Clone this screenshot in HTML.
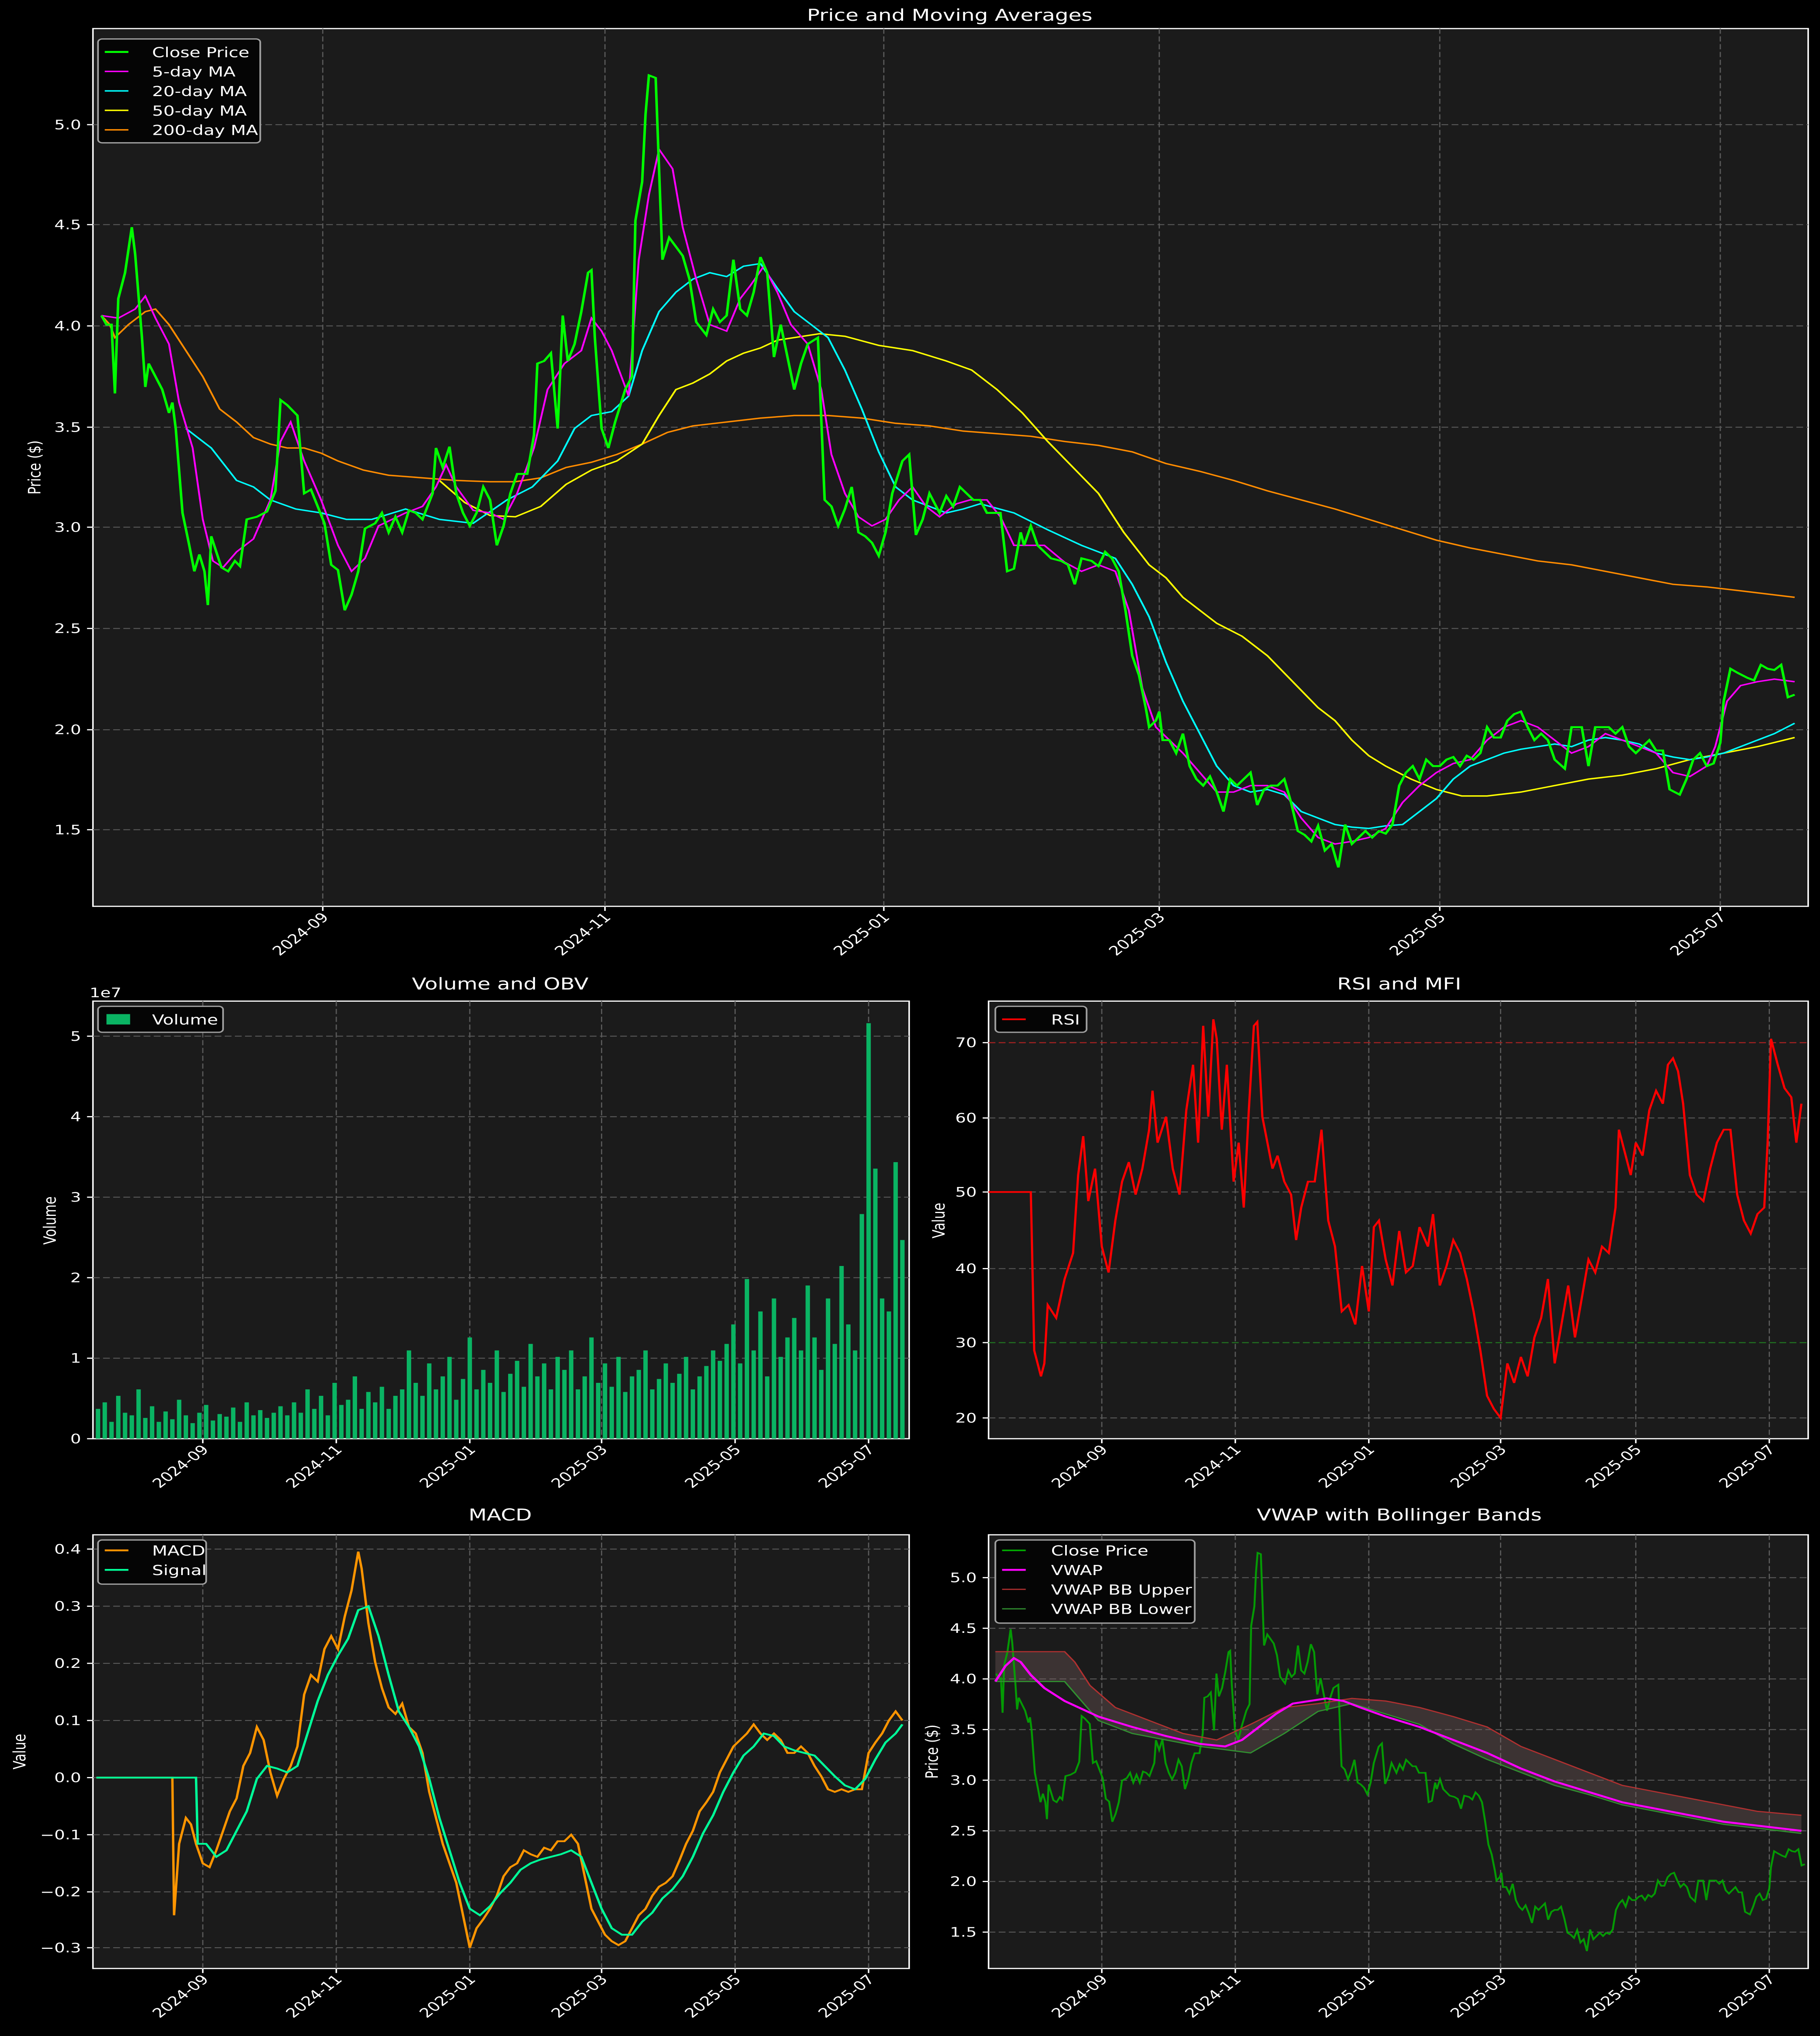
<!DOCTYPE html>
<html><head><meta charset="utf-8"><style>
html,body{margin:0;padding:0;background:#000;width:100%;height:100%;overflow:hidden;}
svg{display:block;position:absolute;left:0;top:0;width:100vw;height:100vh;}
text{font-family:"DejaVu Sans","Liberation Sans",sans-serif;fill:#fff;}
.t{font-size:10px;}
.ti{font-size:12.5px;}
.lg{font-size:10.5px;}
.grid line{stroke:#5a5a5a;stroke-width:0.7;stroke-dasharray:4 2;}
.ax{fill:#1b1b1b;stroke:#fff;stroke-width:0.9;}
.tk line{stroke:#fff;stroke-width:0.9;}
.leg{fill:#050505;stroke:#a0a0a0;stroke-width:1;}
</style></head><body>
<svg width="100%" height="100%" viewBox="0 0 1077 1568" preserveAspectRatio="none" xmlns="http://www.w3.org/2000/svg">
<defs>
<path id="close" d="M60 243L63 250L66 250L68 303L70 230L74 210L78 175L80 196L84 260L86 298L88 280L92 290L96 300L100 318L102 310L104 330L108 395L112 420L115 440L118 427L121 440L123 466L125 413L128 425L131 437L135 440L139 432L142 436L146 400L152 398L158 394L163 378L166 308L170 312L176 320L180 380L184 377L188 390L192 403L196 435L200 439L204 470L208 458L212 440L216 407L222 403L226 395L230 410L234 398L238 410L242 393L246 395L250 400L256 380L258 345L262 360L266 344L270 380L274 395L278 405L282 395L286 375L290 385L294 420L298 405L302 380L306 365L312 365L316 335L318 280L322 278L326 272L330 330L333 243L336 278L340 265L344 240L348 210L350 208L352 260L356 330L360 345L364 325L370 300L374 290L376 170L380 140L382 88L384 58L388 60L392 200L396 183L400 190L404 197L408 215L412 248L418 258L422 238L426 248L430 243L434 200L438 238L442 243L446 225L450 198L454 210L458 275L462 250L466 275L470 300L474 280L478 265L484 260L486 323L488 385L492 390L496 405L500 392L504 375L508 410L512 413L516 418L520 428L524 410L528 380L534 355L538 350L542 412L546 400L550 380L556 395L560 382L564 390L568 375L572 380L576 385L580 385L584 395L588 395L592 395L596 440L600 438L604 410L606 420L610 405L614 420L618 425L622 430L628 432L632 435L636 450L640 430L646 432L650 436L654 425L658 430L662 440L666 470L670 505L674 520L678 545L680 560L684 555L686 548L688 570L692 570L696 580L700 565L704 590L708 600L712 605L716 598L720 610L724 625L728 600L732 605L736 600L740 595L744 620L748 608L752 605L756 605L760 600L764 618L768 640L772 643L776 648L780 636L784 655L788 650L792 668L796 635L800 650L804 645L808 640L812 645L816 640L820 642L824 635L828 605L832 595L836 590L840 600L844 585L848 590L852 590L856 585L860 583L864 590L868 582L872 585L876 580L880 560L884 568L888 568L892 555L896 550L900 548L904 560L908 570L912 565L916 570L920 585L926 592L930 560L936 560L940 590L944 560L948 560L952 560L956 565L960 560L964 575L968 580L972 575L976 570L980 578L984 578L988 608L994 612L998 600L1002 585L1006 580L1010 590L1014 588L1018 572L1020 540L1024 515L1028 518L1034 522L1038 524L1042 512L1046 515L1050 516L1054 512L1058 537L1062 535" fill="none"/>
</defs>
<rect x="0" y="0" width="1077" height="1568" fill="#000"/>

<text class="ti" x="562" y="16" text-anchor="middle">Price and Moving Averages</text>
<rect class="ax" x="55" y="22" width="1015" height="676"/>
<g class="grid">
<line x1="55" x2="1070" y1="96" y2="96"/><line x1="55" x2="1070" y1="173" y2="173"/><line x1="55" x2="1070" y1="251" y2="251"/><line x1="55" x2="1070" y1="329" y2="329"/><line x1="55" x2="1070" y1="406" y2="406"/><line x1="55" x2="1070" y1="484" y2="484"/><line x1="55" x2="1070" y1="562" y2="562"/><line x1="55" x2="1070" y1="639" y2="639"/>
<line y1="22" y2="698" x1="191" x2="191"/><line y1="22" y2="698" x1="358" x2="358"/><line y1="22" y2="698" x1="523" x2="523"/><line y1="22" y2="698" x1="686" x2="686"/><line y1="22" y2="698" x1="852" x2="852"/><line y1="22" y2="698" x1="1018" x2="1018"/>
</g>
<polyline fill="none" stroke="#ff8c00" stroke-width="1.1" points="60,243 65,250 68,260 76,250 86,240 92,238 100,250 110,270 120,290 130,315 140,325 150,337 160,342 170,345 180,345 190,349 200,355 215,362 230,366 250,368 270,370 290,371 305,371 320,368 335,360 350,356 365,350 380,342 395,333 410,328 430,325 450,322 470,320 490,320 510,322 530,326 550,328 570,332 590,334 610,336 630,340 650,343 670,348 690,357 710,363 730,370 750,378 770,385 790,392 810,400 830,408 850,416 870,422 890,427 910,432 930,435 950,440 970,445 990,450 1010,452 1030,455 1062,460"/>
<polyline fill="none" stroke="#ffff00" stroke-width="1.1" points="260,370 275,387 290,397 305,398 320,390 335,373 350,362 365,355 380,342 390,320 400,300 410,295 420,288 430,278 440,272 450,268 460,262 470,260 485,257 500,259 520,266 540,270 560,278 575,285 590,300 605,318 620,340 635,360 650,380 665,410 680,435 690,445 700,460 710,470 720,480 735,490 750,505 765,525 780,545 790,555 800,570 810,582 820,590 835,600 850,608 865,613 880,613 900,610 920,605 940,600 960,597 980,592 1000,585 1020,580 1040,575 1062,568"/>
<polyline fill="none" stroke="#00ffff" stroke-width="1.1" points="110,330 125,345 140,370 150,375 160,385 175,392 190,395 205,400 220,400 240,392 260,400 280,403 300,385 315,375 330,355 340,330 350,320 362,317 372,305 380,270 390,240 400,225 410,215 420,210 430,213 440,205 450,203 460,222 470,240 480,250 490,260 500,285 510,315 520,348 530,375 540,385 550,390 560,395 570,392 580,388 600,395 620,408 640,420 660,430 670,450 680,475 690,510 700,540 710,565 720,590 730,605 740,610 750,608 760,612 770,625 780,630 790,635 800,637 810,638 820,636 830,635 840,625 850,615 860,600 870,590 880,585 890,580 900,577 910,575 920,573 930,575 940,570 950,568 960,570 970,573 980,580 990,583 1000,585 1010,583 1020,580 1030,575 1040,570 1050,565 1062,557"/>
<polyline fill="none" stroke="#ff00ff" stroke-width="1.1" points="60,243 70,245 80,238 86,228 92,245 100,265 106,310 114,345 120,400 126,432 132,437 140,425 150,415 160,385 166,340 172,325 180,355 190,385 200,420 208,440 216,430 224,405 232,400 240,395 250,390 258,375 264,358 270,375 280,393 290,395 298,400 306,380 316,345 324,300 334,280 344,270 350,245 356,255 362,270 372,305 378,200 384,150 390,115 398,130 404,175 412,215 420,250 430,255 438,230 444,220 452,205 460,225 468,250 478,265 486,300 492,350 500,380 508,398 516,405 524,400 532,385 540,375 548,390 556,398 566,388 574,385 584,385 592,398 600,420 608,420 618,420 630,433 640,440 650,435 660,440 668,470 676,530 684,560 692,570 700,580 710,595 720,610 730,610 740,605 750,605 760,610 770,630 780,645 790,650 800,648 810,645 820,638 830,618 840,605 850,595 860,588 870,585 880,570 890,560 900,555 910,560 920,570 930,580 940,575 950,565 960,570 970,575 980,580 990,595 1000,598 1010,590 1015,575 1022,540 1030,528 1040,525 1050,523 1062,525"/>
<use href="#close" stroke="#00ff00" stroke-width="1.5"/>
<g class="tk">
<line x1="51.5" x2="55" y1="96" y2="96"/><line x1="51.5" x2="55" y1="173" y2="173"/><line x1="51.5" x2="55" y1="251" y2="251"/><line x1="51.5" x2="55" y1="329" y2="329"/><line x1="51.5" x2="55" y1="406" y2="406"/><line x1="51.5" x2="55" y1="484" y2="484"/><line x1="51.5" x2="55" y1="562" y2="562"/><line x1="51.5" x2="55" y1="639" y2="639"/>
<line y1="698" y2="701.5" x1="191" x2="191"/><line y1="698" y2="701.5" x1="358" x2="358"/><line y1="698" y2="701.5" x1="523" x2="523"/><line y1="698" y2="701.5" x1="686" x2="686"/><line y1="698" y2="701.5" x1="852" x2="852"/><line y1="698" y2="701.5" x1="1018" x2="1018"/>
</g>
<g class="t" text-anchor="end">
<text x="48" y="99.5">5.0</text><text x="48" y="176.5">4.5</text><text x="48" y="254.5">4.0</text><text x="48" y="332.5">3.5</text><text x="48" y="409.5">3.0</text><text x="48" y="487.5">2.5</text><text x="48" y="565.5">2.0</text><text x="48" y="642.5">1.5</text>
<text transform="translate(195,707) rotate(-45)">2024-09</text><text transform="translate(362,707) rotate(-45)">2024-11</text><text transform="translate(527,707) rotate(-45)">2025-01</text><text transform="translate(690,707) rotate(-45)">2025-03</text><text transform="translate(856,707) rotate(-45)">2025-05</text><text transform="translate(1022,707) rotate(-45)">2025-07</text>
</g>
<text class="t" transform="translate(24,360) rotate(-90)" text-anchor="middle">Price ($)</text>
<rect class="leg" x="58" y="30" width="96" height="80" rx="2.5"/>
<line x1="62" x2="76" y1="40" y2="40" stroke="#00ff00" stroke-width="1.5"/><text class="lg" x="90" y="44">Close Price</text>
<line x1="62" x2="76" y1="55" y2="55" stroke="#ff00ff" stroke-width="1.1"/><text class="lg" x="90" y="59">5-day MA</text>
<line x1="62" x2="76" y1="70" y2="70" stroke="#00ffff" stroke-width="1.1"/><text class="lg" x="90" y="74">20-day MA</text>
<line x1="62" x2="76" y1="85" y2="85" stroke="#ffff00" stroke-width="1.1"/><text class="lg" x="90" y="89">50-day MA</text>
<line x1="62" x2="76" y1="100" y2="100" stroke="#ff8c00" stroke-width="1.1"/><text class="lg" x="90" y="104">200-day MA</text>

<text class="ti" x="296" y="762" text-anchor="middle">Volume and OBV</text>
<rect class="ax" x="55" y="771" width="483" height="337"/>
<g class="grid">
<line x1="55" x2="538" y1="798" y2="798"/><line x1="55" x2="538" y1="860" y2="860"/><line x1="55" x2="538" y1="922" y2="922"/><line x1="55" x2="538" y1="984" y2="984"/><line x1="55" x2="538" y1="1046" y2="1046"/>
<line y1="771" y2="1108" x1="120" x2="120"/><line y1="771" y2="1108" x1="199" x2="199"/><line y1="771" y2="1108" x1="278" x2="278"/><line y1="771" y2="1108" x1="356" x2="356"/><line y1="771" y2="1108" x1="435" x2="435"/><line y1="771" y2="1108" x1="514" x2="514"/>
</g>
<path stroke="#0ab463" stroke-width="2.6" fill="none" d="M58 1108V1085M62 1108V1080M66 1108V1095M70 1108V1075M74 1108V1088M78 1108V1090M82 1108V1070M86 1108V1092M90 1108V1083M94 1108V1095M98 1108V1087M102 1108V1093M106 1108V1078M110 1108V1090M114 1108V1096M118 1108V1088M122 1108V1082M126 1108V1094M130 1108V1089M134 1108V1091M138 1108V1084M142 1108V1095M146 1108V1080M150 1108V1090M154 1108V1086M158 1108V1092M162 1108V1088M166 1108V1083M170 1108V1090M174 1108V1080M178 1108V1088M182 1108V1070M186 1108V1085M190 1108V1075M194 1108V1090M198 1108V1065M202 1108V1082M206 1108V1078M210 1108V1060M214 1108V1085M218 1108V1072M222 1108V1080M226 1108V1068M230 1108V1085M234 1108V1075M238 1108V1070M242 1108V1040M246 1108V1065M250 1108V1075M254 1108V1050M258 1108V1070M262 1108V1060M266 1108V1045M270 1108V1078M274 1108V1062M278 1108V1030M282 1108V1070M286 1108V1055M290 1108V1065M294 1108V1040M298 1108V1072M302 1108V1058M306 1108V1048M310 1108V1068M314 1108V1035M318 1108V1060M322 1108V1050M326 1108V1070M330 1108V1045M334 1108V1055M338 1108V1040M342 1108V1070M346 1108V1060M350 1108V1030M354 1108V1065M358 1108V1050M362 1108V1068M366 1108V1045M370 1108V1072M374 1108V1060M378 1108V1055M382 1108V1040M386 1108V1070M390 1108V1062M394 1108V1050M398 1108V1065M402 1108V1058M406 1108V1045M410 1108V1070M414 1108V1060M418 1108V1052M422 1108V1040M426 1108V1048M430 1108V1035M434 1108V1020M438 1108V1050M442 1108V985M446 1108V1040M450 1108V1010M454 1108V1060M458 1108V1000M462 1108V1045M466 1108V1030M470 1108V1015M474 1108V1040M478 1108V990M482 1108V1030M486 1108V1055M490 1108V1000M494 1108V1035M498 1108V975M502 1108V1020M506 1108V1040M510 1108V935M514 1108V788M518 1108V900M522 1108V1000M526 1108V1010M530 1108V895M534 1108V955"/>
<g class="tk">
<line x1="51.5" x2="55" y1="798" y2="798"/><line x1="51.5" x2="55" y1="860" y2="860"/><line x1="51.5" x2="55" y1="922" y2="922"/><line x1="51.5" x2="55" y1="984" y2="984"/><line x1="51.5" x2="55" y1="1046" y2="1046"/><line x1="51.5" x2="55" y1="1108" y2="1108"/>
<line y1="1108" y2="1111.5" x1="120" x2="120"/><line y1="1108" y2="1111.5" x1="199" x2="199"/><line y1="1108" y2="1111.5" x1="278" x2="278"/><line y1="1108" y2="1111.5" x1="356" x2="356"/><line y1="1108" y2="1111.5" x1="435" x2="435"/><line y1="1108" y2="1111.5" x1="514" x2="514"/>
</g>
<g class="t" text-anchor="end">
<text x="48" y="801.5">5</text><text x="48" y="863.5">4</text><text x="48" y="925.5">3</text><text x="48" y="987.5">2</text><text x="48" y="1049.5">1</text><text x="48" y="1111.5">0</text>
<text transform="translate(124,1117) rotate(-45)">2024-09</text><text transform="translate(203,1117) rotate(-45)">2024-11</text><text transform="translate(282,1117) rotate(-45)">2025-01</text><text transform="translate(360,1117) rotate(-45)">2025-03</text><text transform="translate(439,1117) rotate(-45)">2025-05</text><text transform="translate(518,1117) rotate(-45)">2025-07</text>
</g>
<text class="t" x="53" y="768">1e7</text>
<text class="t" transform="translate(33,940) rotate(-90)" text-anchor="middle">Volume</text>
<rect class="leg" x="58" y="775" width="74" height="20" rx="2.5"/>
<rect x="63" y="781" width="14" height="8" fill="#0ab463"/><text class="lg" x="90" y="789">Volume</text>

<text class="ti" x="828" y="762" text-anchor="middle">RSI and MFI</text>
<rect class="ax" x="585" y="771" width="485" height="337"/>
<g class="grid">
<line x1="585" x2="1070" y1="803" y2="803"/><line x1="585" x2="1070" y1="861" y2="861"/><line x1="585" x2="1070" y1="918" y2="918"/><line x1="585" x2="1070" y1="977" y2="977"/><line x1="585" x2="1070" y1="1034" y2="1034"/><line x1="585" x2="1070" y1="1092" y2="1092"/>
<line y1="771" y2="1108" x1="652" x2="652"/><line y1="771" y2="1108" x1="731" x2="731"/><line y1="771" y2="1108" x1="810" x2="810"/><line y1="771" y2="1108" x1="888" x2="888"/><line y1="771" y2="1108" x1="968" x2="968"/><line y1="771" y2="1108" x1="1047" x2="1047"/>
</g>
<line x1="585" x2="1070" y1="803" y2="803" stroke="#a02020" stroke-width="0.8" stroke-dasharray="4 2"/>
<line x1="585" x2="1070" y1="1034" y2="1034" stroke="#207020" stroke-width="0.8" stroke-dasharray="4 2"/>
<polyline fill="none" stroke="#ff0000" stroke-width="1.3" points="585,918 610,918 612,1040 614,1050 616,1060 618,1050 620,1005 625,1015 630,985 635,965 638,905 641,875 644,925 648,900 652,960 656,980 660,940 664,910 668,895 672,920 676,900 680,870 682,840 685,880 690,860 694,900 698,920 702,855 706,820 709,880 712,790 715,860 718,785 720,800 723,870 726,820 730,910 733,880 736,930 739,855 742,790 744,787 747,860 750,880 753,900 756,890 760,910 764,920 767,955 770,930 774,910 778,910 782,870 786,940 790,960 794,1010 798,1005 802,1020 806,975 810,1010 813,945 816,940 820,970 824,990 828,948 832,980 836,975 840,945 845,960 848,935 852,990 856,975 860,955 864,965 868,985 872,1010 876,1040 880,1075 884,1085 888,1092 892,1050 896,1065 900,1045 904,1060 908,1030 912,1015 916,985 920,1050 924,1020 928,990 932,1030 936,1000 940,970 944,980 948,960 952,965 956,930 958,870 962,890 965,905 968,880 972,890 976,855 980,840 984,850 987,820 990,815 993,825 996,850 1000,905 1004,920 1008,925 1012,900 1016,880 1020,870 1024,870 1028,920 1032,940 1036,950 1040,935 1044,930 1046,880 1048,800 1052,820 1056,838 1060,845 1063,880 1066,850"/>
<g class="tk">
<line x1="581.5" x2="585" y1="803" y2="803"/><line x1="581.5" x2="585" y1="861" y2="861"/><line x1="581.5" x2="585" y1="918" y2="918"/><line x1="581.5" x2="585" y1="977" y2="977"/><line x1="581.5" x2="585" y1="1034" y2="1034"/><line x1="581.5" x2="585" y1="1092" y2="1092"/>
<line y1="1108" y2="1111.5" x1="652" x2="652"/><line y1="1108" y2="1111.5" x1="731" x2="731"/><line y1="1108" y2="1111.5" x1="810" x2="810"/><line y1="1108" y2="1111.5" x1="888" x2="888"/><line y1="1108" y2="1111.5" x1="968" x2="968"/><line y1="1108" y2="1111.5" x1="1047" x2="1047"/>
</g>
<g class="t" text-anchor="end">
<text x="578" y="806.5">70</text><text x="578" y="864.5">60</text><text x="578" y="921.5">50</text><text x="578" y="980.5">40</text><text x="578" y="1037.5">30</text><text x="578" y="1095.5">20</text>
<text transform="translate(656,1117) rotate(-45)">2024-09</text><text transform="translate(735,1117) rotate(-45)">2024-11</text><text transform="translate(814,1117) rotate(-45)">2025-01</text><text transform="translate(892,1117) rotate(-45)">2025-03</text><text transform="translate(972,1117) rotate(-45)">2025-05</text><text transform="translate(1051,1117) rotate(-45)">2025-07</text>
</g>
<text class="t" transform="translate(559,940) rotate(-90)" text-anchor="middle">Value</text>
<rect class="leg" x="589" y="775" width="54" height="20" rx="2.5"/>
<line x1="593" x2="607" y1="785" y2="785" stroke="#ff0000" stroke-width="1.3"/><text class="lg" x="622" y="789">RSI</text>

<text class="ti" x="296" y="1171" text-anchor="middle">MACD</text>
<rect class="ax" x="55" y="1182" width="483" height="334"/>
<g class="grid">
<line x1="55" x2="538" y1="1193" y2="1193"/><line x1="55" x2="538" y1="1237" y2="1237"/><line x1="55" x2="538" y1="1281" y2="1281"/><line x1="55" x2="538" y1="1325" y2="1325"/><line x1="55" x2="538" y1="1369" y2="1369"/><line x1="55" x2="538" y1="1413" y2="1413"/><line x1="55" x2="538" y1="1457" y2="1457"/><line x1="55" x2="538" y1="1500" y2="1500"/>
<line y1="1182" y2="1516" x1="120" x2="120"/><line y1="1182" y2="1516" x1="199" x2="199"/><line y1="1182" y2="1516" x1="278" x2="278"/><line y1="1182" y2="1516" x1="356" x2="356"/><line y1="1182" y2="1516" x1="435" x2="435"/><line y1="1182" y2="1516" x1="514" x2="514"/>
</g>
<polyline fill="none" stroke="#ff9500" stroke-width="1.4" points="57,1369 102,1369 103,1475 106,1420 110,1400 113,1405 116,1420 120,1435 124,1438 128,1425 132,1410 136,1395 140,1385 144,1360 148,1350 152,1330 156,1340 160,1365 164,1383 168,1370 172,1360 176,1345 180,1305 184,1290 188,1295 192,1270 196,1260 200,1270 204,1245 208,1225 212,1195 214,1208 218,1250 222,1280 226,1300 230,1315 234,1320 238,1312 242,1330 246,1335 250,1350 254,1380 258,1400 262,1420 266,1435 270,1450 274,1475 278,1500 282,1485 286,1478 290,1470 294,1460 298,1445 302,1438 306,1435 310,1425 314,1428 318,1430 322,1423 326,1425 330,1418 334,1418 338,1413 342,1420 346,1445 350,1470 354,1480 358,1490 362,1495 366,1498 370,1495 374,1485 378,1475 382,1470 386,1460 390,1453 394,1450 398,1445 402,1433 406,1420 410,1410 414,1395 418,1388 422,1380 426,1365 430,1355 434,1345 438,1340 442,1335 446,1328 450,1335 454,1340 458,1335 462,1340 466,1350 470,1350 474,1345 478,1350 482,1360 486,1368 490,1378 494,1380 498,1378 502,1380 506,1378 510,1378 514,1350 518,1342 522,1335 526,1325 530,1318 534,1325"/>
<polyline fill="none" stroke="#00ff99" stroke-width="1.4" points="57,1369 116,1369 117,1420 122,1420 128,1430 134,1425 140,1410 146,1395 152,1370 158,1360 164,1362 170,1365 176,1360 182,1335 188,1310 194,1290 200,1275 206,1262 212,1240 218,1237 224,1260 230,1290 236,1318 242,1330 248,1345 254,1370 260,1400 266,1425 272,1450 278,1470 284,1475 290,1468 296,1458 302,1450 308,1440 314,1435 320,1432 326,1430 332,1428 338,1425 344,1430 350,1450 356,1470 362,1485 368,1490 374,1490 380,1480 386,1473 392,1462 398,1455 404,1445 410,1430 416,1412 422,1398 428,1380 434,1365 440,1352 446,1345 452,1335 458,1337 464,1345 470,1348 476,1350 482,1352 488,1360 494,1368 500,1375 506,1378 512,1370 518,1355 524,1342 530,1335 534,1328"/>
<g class="tk">
<line x1="51.5" x2="55" y1="1193" y2="1193"/><line x1="51.5" x2="55" y1="1237" y2="1237"/><line x1="51.5" x2="55" y1="1281" y2="1281"/><line x1="51.5" x2="55" y1="1325" y2="1325"/><line x1="51.5" x2="55" y1="1369" y2="1369"/><line x1="51.5" x2="55" y1="1413" y2="1413"/><line x1="51.5" x2="55" y1="1457" y2="1457"/><line x1="51.5" x2="55" y1="1500" y2="1500"/>
<line y1="1516" y2="1519.5" x1="120" x2="120"/><line y1="1516" y2="1519.5" x1="199" x2="199"/><line y1="1516" y2="1519.5" x1="278" x2="278"/><line y1="1516" y2="1519.5" x1="356" x2="356"/><line y1="1516" y2="1519.5" x1="435" x2="435"/><line y1="1516" y2="1519.5" x1="514" x2="514"/>
</g>
<g class="t" text-anchor="end">
<text x="48" y="1196.5">0.4</text><text x="48" y="1240.5">0.3</text><text x="48" y="1284.5">0.2</text><text x="48" y="1328.5">0.1</text><text x="48" y="1372.5">0.0</text><text x="48" y="1416.5">−0.1</text><text x="48" y="1460.5">−0.2</text><text x="48" y="1503.5">−0.3</text>
<text transform="translate(124,1525) rotate(-45)">2024-09</text><text transform="translate(203,1525) rotate(-45)">2024-11</text><text transform="translate(282,1525) rotate(-45)">2025-01</text><text transform="translate(360,1525) rotate(-45)">2025-03</text><text transform="translate(439,1525) rotate(-45)">2025-05</text><text transform="translate(518,1525) rotate(-45)">2025-07</text>
</g>
<text class="t" transform="translate(15,1349) rotate(-90)" text-anchor="middle">Value</text>
<rect class="leg" x="58" y="1186" width="64" height="34" rx="2.5"/>
<line x1="62" x2="76" y1="1194" y2="1194" stroke="#ff9500" stroke-width="1.4"/><text class="lg" x="90" y="1198">MACD</text>
<line x1="62" x2="76" y1="1209" y2="1209" stroke="#00ff99" stroke-width="1.4"/><text class="lg" x="90" y="1213">Signal</text>

<text class="ti" x="828" y="1171" text-anchor="middle">VWAP with Bollinger Bands</text>
<rect class="ax" x="585" y="1182" width="485" height="334"/>
<g class="grid">
<line x1="585" x2="1070" y1="1215" y2="1215"/><line x1="585" x2="1070" y1="1254" y2="1254"/><line x1="585" x2="1070" y1="1293" y2="1293"/><line x1="585" x2="1070" y1="1332" y2="1332"/><line x1="585" x2="1070" y1="1371" y2="1371"/><line x1="585" x2="1070" y1="1410" y2="1410"/><line x1="585" x2="1070" y1="1449" y2="1449"/><line x1="585" x2="1070" y1="1488" y2="1488"/>
<line y1="1182" y2="1516" x1="652" x2="652"/><line y1="1182" y2="1516" x1="731" x2="731"/><line y1="1182" y2="1516" x1="810" x2="810"/><line y1="1182" y2="1516" x1="888" x2="888"/><line y1="1182" y2="1516" x1="968" x2="968"/><line y1="1182" y2="1516" x1="1047" x2="1047"/>
</g>
<polygon fill="#7a6060" fill-opacity="0.35" points="589,1272 630,1272 636,1280 645,1298 660,1315 680,1325 700,1335 720,1340 740,1328 760,1315 780,1312 800,1308 820,1310 840,1315 860,1322 880,1330 900,1345 920,1355 940,1365 960,1375 980,1380 1000,1385 1020,1390 1040,1395 1066,1398 1066,1412 1040,1408 1020,1405 1000,1400 980,1395 960,1390 940,1382 920,1375 900,1365 880,1355 860,1343 840,1328 820,1320 800,1312 780,1318 760,1335 740,1350 710,1345 690,1340 670,1335 650,1325 630,1295 589,1295"/>
<g transform="matrix(0.4776 0 0 0.5028 560.8 1166.7)"><use href="#close" stroke="#00b000" stroke-width="2.4" stroke-opacity="0.85"/></g>
<polyline fill="none" stroke="#b03030" stroke-width="0.9" points="589,1272 630,1272 636,1280 645,1298 660,1315 680,1325 700,1335 720,1340 740,1328 760,1315 780,1312 800,1308 820,1310 840,1315 860,1322 880,1330 900,1345 920,1355 940,1365 960,1375 980,1380 1000,1385 1020,1390 1040,1395 1066,1398"/>
<polyline fill="none" stroke="#309030" stroke-width="0.9" points="589,1295 630,1295 650,1325 670,1335 690,1340 710,1345 740,1350 760,1335 780,1318 800,1312 820,1320 840,1328 860,1343 880,1355 900,1365 920,1375 940,1382 960,1390 980,1395 1000,1400 1020,1405 1040,1408 1066,1412"/>
<polyline fill="none" stroke="#ff00ff" stroke-width="1.5" points="589,1295 595,1283 600,1277 604,1280 610,1290 618,1300 630,1310 650,1322 670,1330 690,1337 710,1343 725,1345 735,1340 745,1330 755,1320 765,1312 775,1310 785,1308 795,1310 805,1315 820,1322 840,1330 860,1340 880,1350 900,1362 920,1372 940,1380 960,1388 980,1393 1000,1398 1020,1403 1040,1406 1066,1410"/>
<g class="tk">
<line x1="581.5" x2="585" y1="1215" y2="1215"/><line x1="581.5" x2="585" y1="1254" y2="1254"/><line x1="581.5" x2="585" y1="1293" y2="1293"/><line x1="581.5" x2="585" y1="1332" y2="1332"/><line x1="581.5" x2="585" y1="1371" y2="1371"/><line x1="581.5" x2="585" y1="1410" y2="1410"/><line x1="581.5" x2="585" y1="1449" y2="1449"/><line x1="581.5" x2="585" y1="1488" y2="1488"/>
<line y1="1516" y2="1519.5" x1="652" x2="652"/><line y1="1516" y2="1519.5" x1="731" x2="731"/><line y1="1516" y2="1519.5" x1="810" x2="810"/><line y1="1516" y2="1519.5" x1="888" x2="888"/><line y1="1516" y2="1519.5" x1="968" x2="968"/><line y1="1516" y2="1519.5" x1="1047" x2="1047"/>
</g>
<g class="t" text-anchor="end">
<text x="578" y="1218.5">5.0</text><text x="578" y="1257.5">4.5</text><text x="578" y="1296.5">4.0</text><text x="578" y="1335.5">3.5</text><text x="578" y="1374.5">3.0</text><text x="578" y="1413.5">2.5</text><text x="578" y="1452.5">2.0</text><text x="578" y="1491.5">1.5</text>
<text transform="translate(656,1525) rotate(-45)">2024-09</text><text transform="translate(735,1525) rotate(-45)">2024-11</text><text transform="translate(814,1525) rotate(-45)">2025-01</text><text transform="translate(892,1525) rotate(-45)">2025-03</text><text transform="translate(972,1525) rotate(-45)">2025-05</text><text transform="translate(1051,1525) rotate(-45)">2025-07</text>
</g>
<text class="t" transform="translate(555,1349) rotate(-90)" text-anchor="middle">Price ($)</text>
<rect class="leg" x="589" y="1186" width="118" height="64" rx="2.5"/>
<line x1="593" x2="607" y1="1194" y2="1194" stroke="#00b000" stroke-width="1.2"/><text class="lg" x="622" y="1198">Close Price</text>
<line x1="593" x2="607" y1="1209" y2="1209" stroke="#ff00ff" stroke-width="1.5"/><text class="lg" x="622" y="1213">VWAP</text>
<line x1="593" x2="607" y1="1224" y2="1224" stroke="#b03030" stroke-width="0.9"/><text class="lg" x="622" y="1228">VWAP BB Upper</text>
<line x1="593" x2="607" y1="1239" y2="1239" stroke="#309030" stroke-width="0.9"/><text class="lg" x="622" y="1243">VWAP BB Lower</text>
</svg>
</body></html>
